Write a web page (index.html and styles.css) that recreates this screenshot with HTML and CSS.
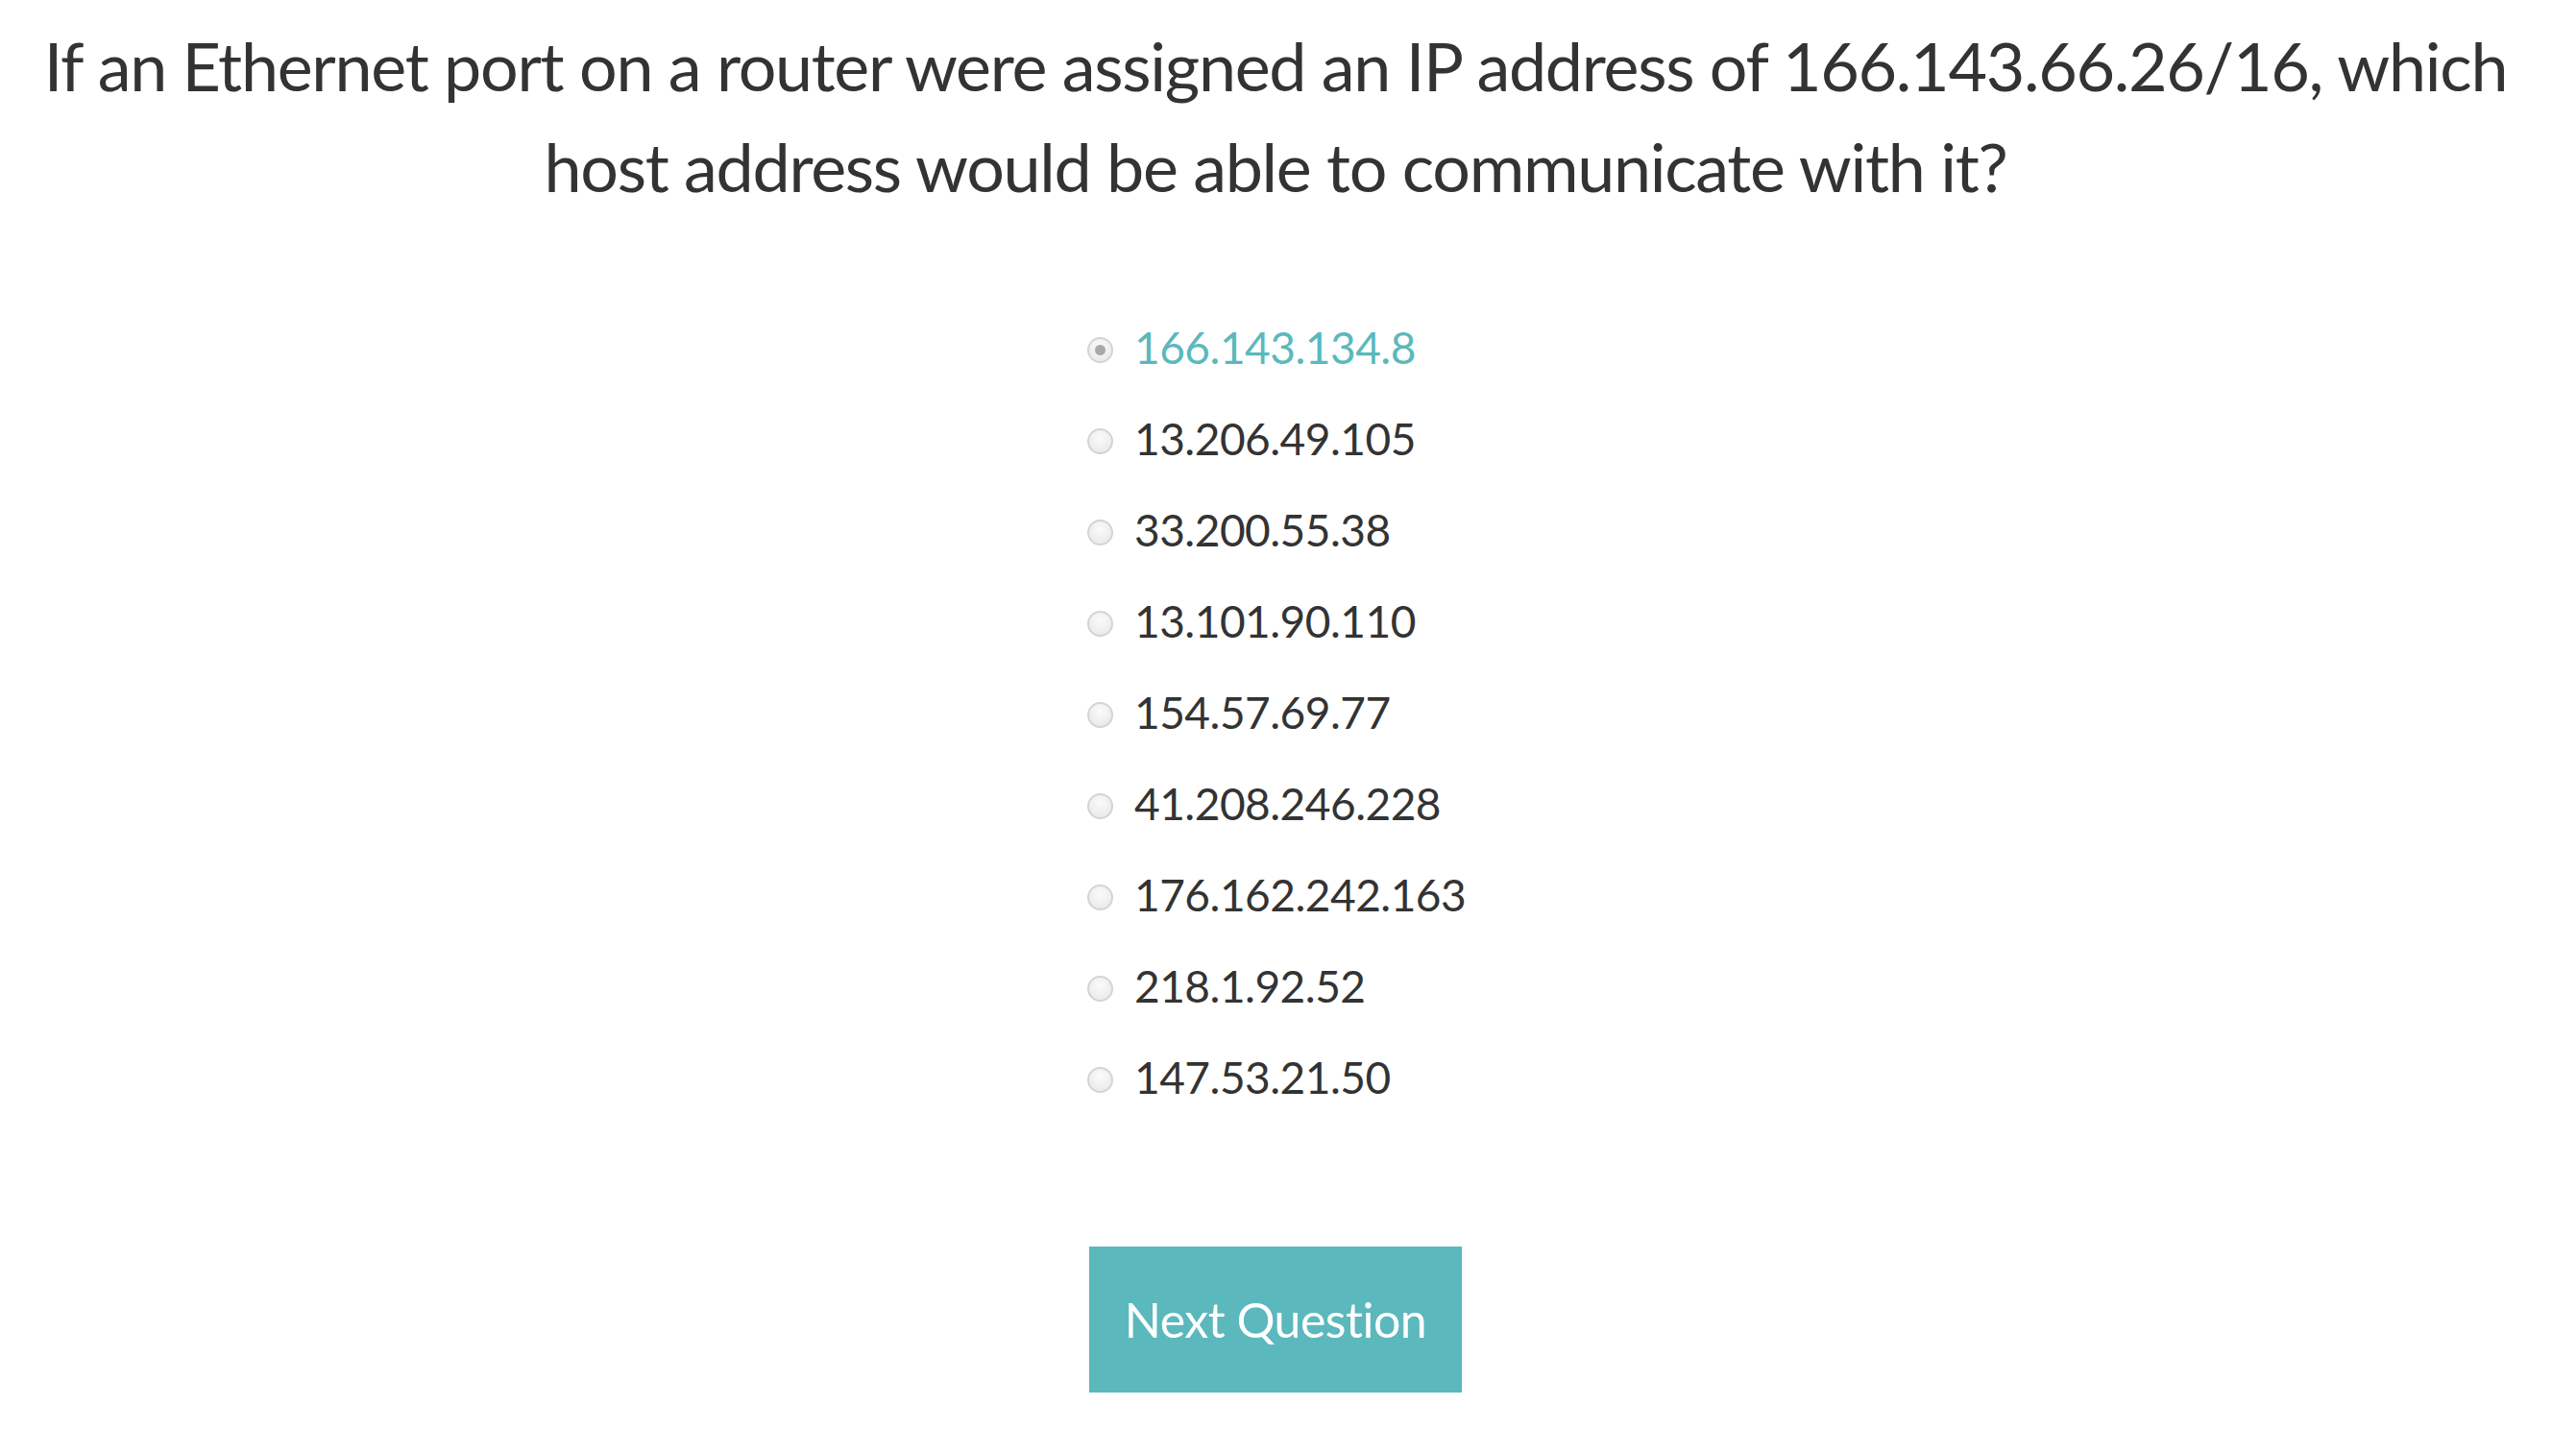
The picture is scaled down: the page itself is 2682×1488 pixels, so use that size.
FILE: index.html
```html
<!DOCTYPE html>
<html lang="en">
<head>
<meta charset="utf-8">
<title>Quiz</title>
<link rel="stylesheet" href="styles.css">
</head>
<body>
<main class="page">
  <h1 class="question">If an Ethernet port on a router were assigned an IP address of 166.143.66.26/16, which host address would be able to communicate with it?</h1>
  <form class="quiz">
    <ul class="options">
      <li class="option selected"><label><input type="radio" name="answer" checked><span class="label-text">166.143.134.8</span></label></li>
      <li class="option"><label><input type="radio" name="answer"><span class="label-text">13.206.49.105</span></label></li>
      <li class="option"><label><input type="radio" name="answer"><span class="label-text">33.200.55.38</span></label></li>
      <li class="option"><label><input type="radio" name="answer"><span class="label-text">13.101.90.110</span></label></li>
      <li class="option"><label><input type="radio" name="answer"><span class="label-text">154.57.69.77</span></label></li>
      <li class="option"><label><input type="radio" name="answer"><span class="label-text">41.208.246.228</span></label></li>
      <li class="option"><label><input type="radio" name="answer"><span class="label-text">176.162.242.163</span></label></li>
      <li class="option"><label><input type="radio" name="answer"><span class="label-text">218.1.92.52</span></label></li>
      <li class="option"><label><input type="radio" name="answer"><span class="label-text">147.53.21.50</span></label></li>
    </ul>
    <button type="button" class="next-btn">Next Question</button>
  </form>
</main>
</body>
</html>
```
FILE: styles.css
```css
html, body {
  margin: 0;
  padding: 0;
  background: #ffffff;
}

body {
  font-family: "Lato", "Liberation Sans", sans-serif;
  color: #333333;
}

.page {
  width: calc(100% - 26px);
  display: flex;
  flex-direction: column;
  align-items: center;
}

.question {
  margin: 16px 0 0 0;
  max-width: 2610px;
  font-size: 70px;
  font-weight: 400;
  line-height: 105px;
  letter-spacing: -1.3px;
  text-align: center;
  color: #333333;
}

.quiz {
  width: 388px;
  margin-top: 88px;
  display: flex;
  flex-direction: column;
}

.options {
  list-style: none;
  margin: 0;
  padding: 0;
}

.option {
  height: 95px;
  display: flex;
  align-items: center;
}

.option label {
  display: flex;
  align-items: center;
  gap: 22px;
  margin-left: -2px;
  font-size: 46px;
  line-height: 1;
  cursor: pointer;
  white-space: nowrap;
}

.option input {
  appearance: none;
  -webkit-appearance: none;
  margin: 0;
  width: 27px;
  height: 27px;
  border-radius: 50%;
  border: 2px solid #d4d4d4;
  background: radial-gradient(circle at 50% 35%, #fbfbfb 0%, #ececec 70%, #e2e2e2 100%);
  box-sizing: border-box;
  flex: none;
  display: grid;
  place-items: center;
  position: relative;
  top: 3px;
}

.option input:checked::after {
  content: "";
  width: 11px;
  height: 11px;
  border-radius: 50%;
  background: #a9a9a9;
}

.label-text {
  letter-spacing: -0.5px;
}

.option.selected .label-text {
  color: #5bb8bc;
}

.next-btn {
  margin-top: 129px;
  width: 388px;
  height: 152px;
  border: none;
  background: #5bb8bc;
  color: #ffffff;
  font-family: "Lato", "Liberation Sans", sans-serif;
  font-size: 50px;
  font-weight: 400;
  letter-spacing: -0.5px;
  padding: 0;
  cursor: pointer;
}
```
